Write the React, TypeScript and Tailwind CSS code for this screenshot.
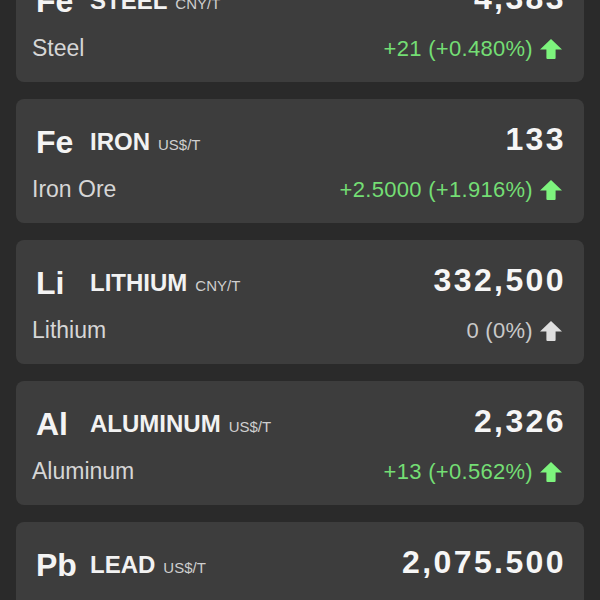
import React from "react";

type Item = {
  sym: string;
  name: string;
  unit: string;
  label: string;
  price: string;
  change: string;
  up: boolean;
};

const items: Item[] = [
  { sym: "Fe", name: "STEEL", unit: "CNY/T", label: "Steel", price: "4,383", change: "+21 (+0.480%)", up: true },
  { sym: "Fe", name: "IRON", unit: "US$/T", label: "Iron Ore", price: "133", change: "+2.5000 (+1.916%)", up: true },
  { sym: "Li", name: "LITHIUM", unit: "CNY/T", label: "Lithium", price: "332,500", change: "0 (0%)", up: false },
  { sym: "Al", name: "ALUMINUM", unit: "US$/T", label: "Aluminum", price: "2,326", change: "+13 (+0.562%)", up: true },
  { sym: "Pb", name: "LEAD", unit: "US$/T", label: "Lead", price: "2,075.500", change: "+5 (+0.241%)", up: true },
];

function Arrow({ color }: { color: string }) {
  return (
    <svg width="22" height="20" viewBox="0 0 22 20" className="shrink-0">
      <path d="M11 0 L22 10.5 H15.6 V19 Q15.6 20 14.6 20 H7.4 Q6.4 20 6.4 19 V10.5 H0 Z" fill={color} />
    </svg>
  );
}

function Card({ it }: { it: Item }) {
  return (
    <div className="h-[124px] shrink-0 rounded-lg bg-[#3d3d3d] pl-[20px] pr-[18px] pt-[24px]">
      <div className="flex items-baseline justify-between">
        <div className="flex items-baseline">
          <span className="w-[54px] translate-y-[3px] text-[32px] font-bold leading-none text-[#f4f4f4]">{it.sym}</span>
          <span className="text-[24px] font-semibold leading-none text-[#f2f2f2]">{it.name}</span>
          <span className="ml-[8px] text-[15px] leading-none text-[#cfcfcf]">{it.unit}</span>
        </div>
        <span className="text-[32px] font-bold leading-none tracking-[2.4px] text-[#f6f6f6]">{it.price}</span>
      </div>
      <div className="-ml-[4px] mt-[23px] flex items-center justify-between">
        <span className="text-[23px] leading-none text-[#d6d6d6]">{it.label}</span>
        <div className="flex items-center gap-[7px] pr-[4px]">
          <span
            className={
              it.up
                ? "text-[22px] leading-none tracking-[0.3px] text-[#74de74]"
                : "text-[22px] leading-none tracking-[0.3px] text-[#c9c9c9]"
            }
          >
            {it.change}
          </span>
          <Arrow color={it.up ? "#7df47d" : "#dedede"} />
        </div>
      </div>
    </div>
  );
}

export default function App() {
  return (
    <div
      className="h-[600px] w-[600px] overflow-hidden bg-[#2a2a2a]"
      style={{ fontFamily: '"Liberation Sans", Arial, sans-serif' }}
    >
      <div className="-mt-[42px] flex flex-col gap-[17px] px-4">
        {items.map((it, i) => (
          <Card key={i} it={it} />
        ))}
      </div>
    </div>
  );
}
